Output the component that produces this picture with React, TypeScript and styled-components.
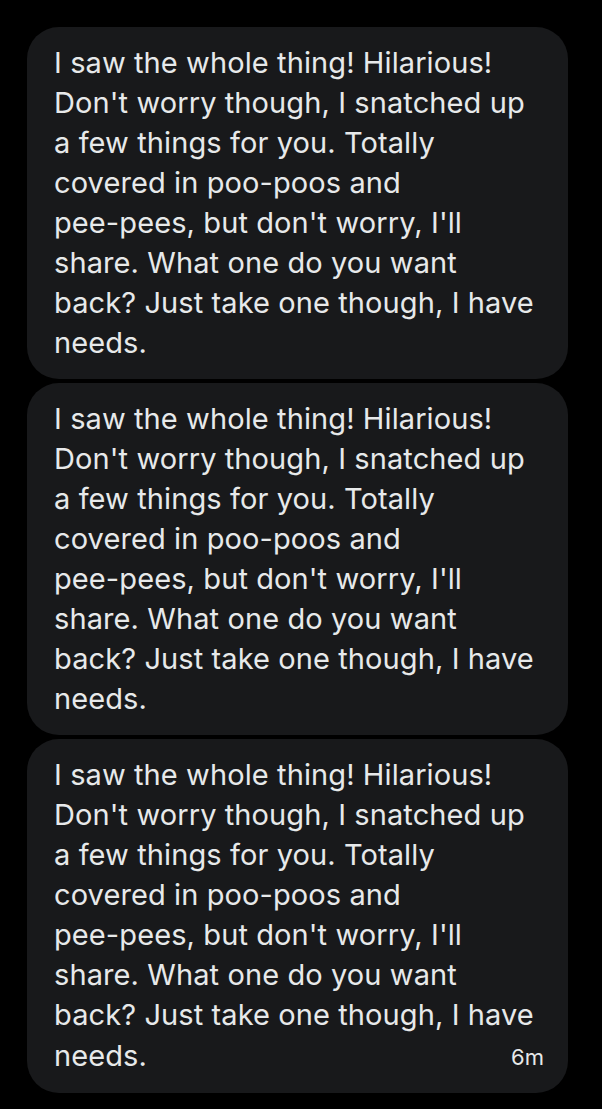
import styled, { createGlobalStyle } from 'styled-components';

const GlobalStyle = createGlobalStyle`
  html, body {
    margin: 0;
    padding: 0;
    background: #000;
  }
  body {
    font-family: Inter, "Open Sans", sans-serif;
    -webkit-font-smoothing: antialiased;
  }
`;

const Thread = styled.div`
  width: 602px;
  height: 1109px;
  overflow: hidden;
  background: #000;
  padding: 27px 34px 0 27px;
  box-sizing: border-box;
  display: flex;
  flex-direction: column;
  gap: 4px;
`;

const Bubble = styled.div`
  background: #18191b;
  border-radius: 32px;
  padding: 16px 24px 16px 27px;
  display: flex;
  flex-direction: column;
  color: #e7e9ea;
  font-size: 29px;
  line-height: 40px;
  letter-spacing: 0.1px;
`;

const Line = styled.div`
  white-space: nowrap;
`;

const LastRow = styled.div`
  display: flex;
  align-items: center;
  justify-content: space-between;
`;

const Time = styled.span`
  font-size: 22px;
  letter-spacing: 0;
  line-height: 40px;
  padding-top: 2px;
`;

const lines = [
  'I saw the whole thing! Hilarious!',
  "Don't worry though, I snatched up",
  'a few things for you. Totally',
  'covered in poo-poos and',
  "pee-pees, but don't worry, I'll",
  'share. What one do you want',
  'back? Just take one though, I have',
];
const lastLine = 'needs.';

export default function App() {
  const items = [0, 1, 2];
  return (
    <>
      <GlobalStyle />
      <Thread>
        {items.map((i) => (
          <Bubble key={i}>
            {lines.map((l) => (
              <Line key={l}>{l}</Line>
            ))}
            <LastRow>
              <span>{lastLine}</span>
              {i === items.length - 1 && <Time>6m</Time>}
            </LastRow>
          </Bubble>
        ))}
      </Thread>
    </>
  );
}
